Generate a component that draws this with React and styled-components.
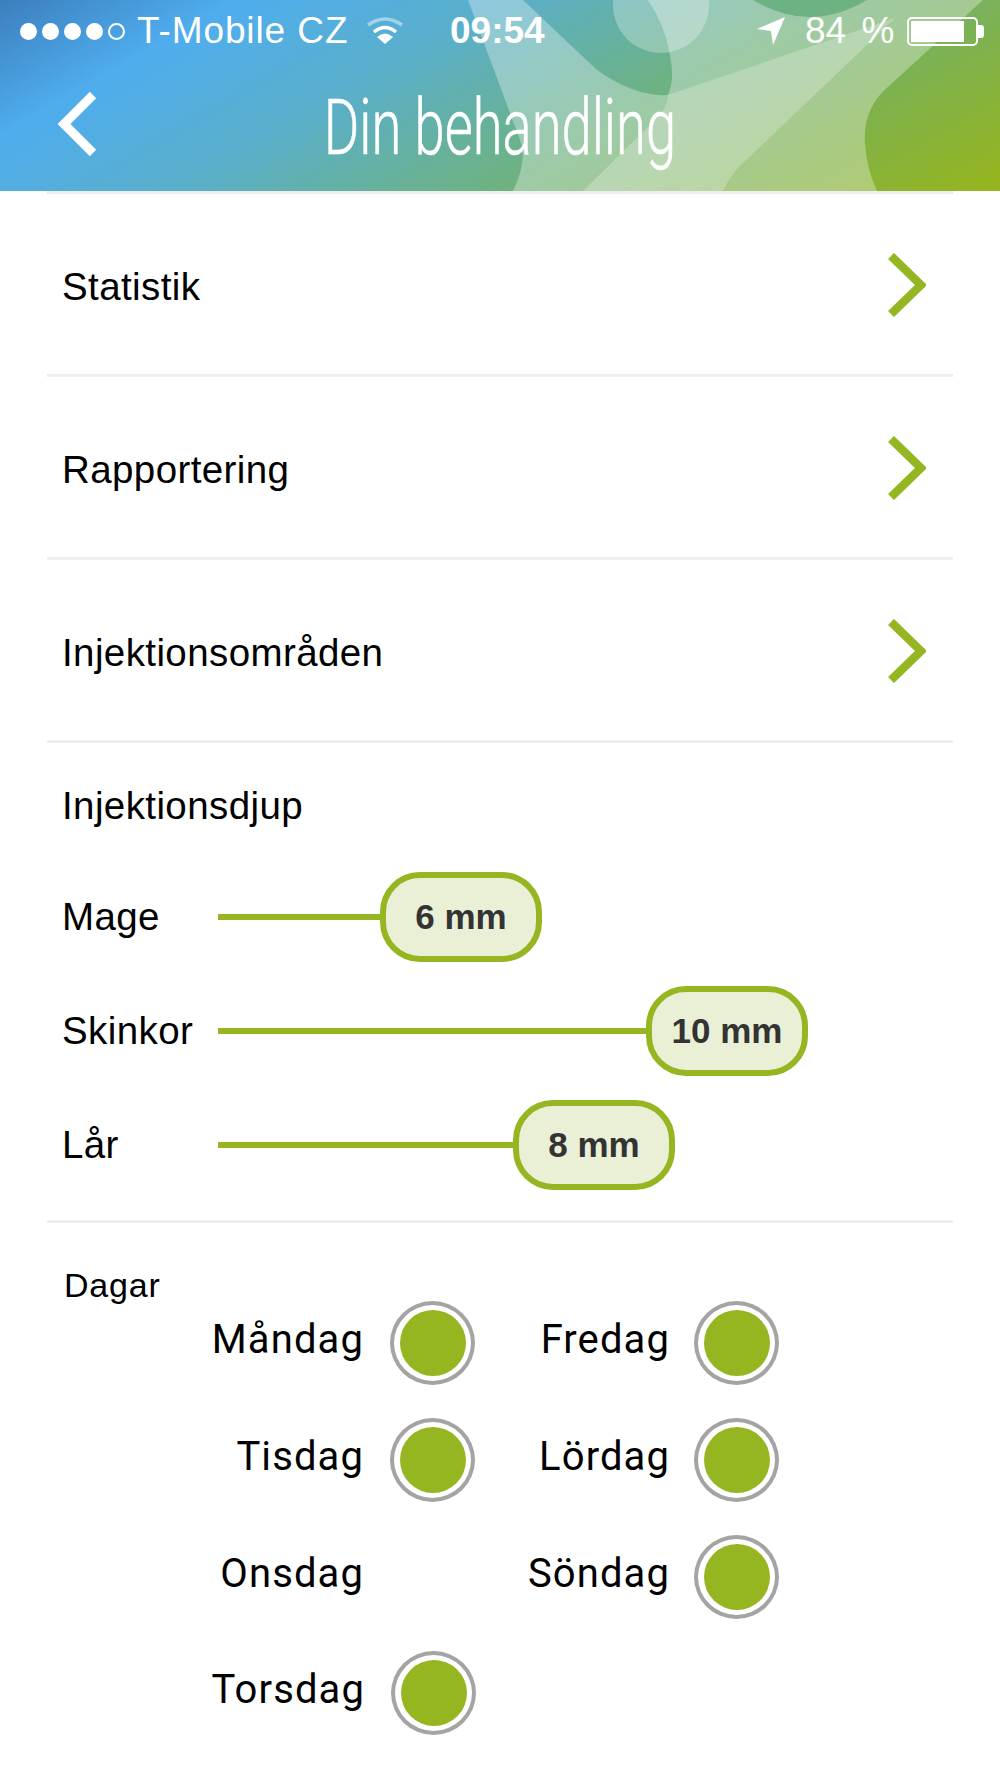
import React from "react";
import styled, { createGlobalStyle } from "styled-components";

const GlobalStyle = createGlobalStyle`
  html, body {
    margin: 0;
    padding: 0;
    background: #fff;
  }
  body {
    font-family: "Liberation Sans", Arial, sans-serif;
  }
`;

const GREEN = "#95b521";

const Page = styled.div`
  width: 1000px;
  height: 1778px;
  overflow: hidden;
  background: #fff;
  color: #000;
`;

const Header = styled.header`
  position: relative;
  height: 191px;
  overflow: hidden;
  color: #fff;
  background: linear-gradient(
    150deg,
    #3c7fbe 0%,
    #4fadee 18%,
    #5aafca 38%,
    #6bb28c 58%,
    #7fb24c 80%,
    #97b51c 100%
  );
`;

const Blobs = styled.svg`
  position: absolute;
  inset: 0;
  width: 1000px;
  height: 191px;
`;

const StatusBar = styled.div`
  position: relative;
  display: grid;
  grid-template-columns: 450px 96px 1fr;
  align-items: center;
  height: 60px;
  padding-top: 2px;
  box-sizing: border-box;
  font-size: 37px;
`;

const StatusLeft = styled.div`
  display: flex;
  align-items: center;
  padding-left: 20px;
`;

const Signal = styled.div`
  display: flex;
  gap: 5px;
  margin-right: 12px;
`;

const Dot = styled.span`
  width: 17px;
  height: 17px;
  box-sizing: border-box;
  border-radius: 50%;
  border: 2px solid #fff;
  background: ${(p) => (p.$empty ? "transparent" : "#fff")};
`;

const Carrier = styled.span`
  margin-right: 18px;
  white-space: nowrap;
  letter-spacing: 0.9px;
`;

const Time = styled.span`
  font-weight: 700;
  white-space: nowrap;
`;

const StatusRight = styled.div`
  display: flex;
  align-items: center;
  padding-left: 211px;
`;

const Percent = styled.span`
  margin-left: 20px;
  margin-right: 13px;
  white-space: nowrap;
  word-spacing: 5px;
`;

const Battery = styled.div`
  position: relative;
  box-sizing: border-box;
  width: 71px;
  height: 29px;
  padding: 2px;
  border: 2px solid #fff;
  border-radius: 5px;

  &::after {
    content: "";
    position: absolute;
    left: 69px;
    top: 6px;
    width: 6px;
    height: 13px;
    border-radius: 0 3px 3px 0;
    background: #fff;
  }
`;

const BatteryFill = styled.div`
  height: 100%;
  background: #fff;
`;

const NavBar = styled.div`
  position: relative;
  display: flex;
  align-items: center;
  justify-content: center;
  height: 131px;
`;

const BackIcon = styled.svg`
  position: absolute;
  left: 54px;
  top: 30px;
`;

const Title = styled.h1`
  margin: 5px 0 0;
  font-family: Roboto, "Liberation Sans", sans-serif;
  font-weight: 300;
  font-size: 77px;
  line-height: 126px;
  white-space: nowrap;
  -webkit-text-stroke: 0.6px #fff;
  transform: scaleX(0.705);
`;

const Content = styled.main`
  margin: 0 47px;
`;

const Divider = styled.hr`
  height: 3px;
  margin: 0;
  border: 0;
  background: #eeeeee;
`;

const MenuRow = styled.div`
  display: flex;
  align-items: center;
  justify-content: space-between;
  box-sizing: border-box;
  height: 180px;
  padding: 0 27px 0 15px;
`;

const RowLabel = styled.span`
  margin-top: 6px;
  font-size: 38.5px;
  letter-spacing: 0.4px;
`;

const RowChevron = styled.svg`
  margin-top: 2px;
`;

const DepthSection = styled.section`
  height: 477px;
  padding: 0 15px;
`;

const SectionTitle = styled.div`
  height: 117px;
  padding-top: 41px;
  box-sizing: border-box;
  font-size: 38.5px;
  line-height: 44px;
  letter-spacing: 0.4px;
`;

const SliderRow = styled.div`
  display: flex;
  align-items: center;
  height: 114px;
`;

const SliderLabel = styled.span`
  flex: none;
  width: 156px;
  font-size: 38.5px;
  letter-spacing: 0.4px;
`;

const Track = styled.div`
  flex: none;
  width: ${(p) => p.$length}px;
  height: 6px;
  background: ${GREEN};
`;

const Pill = styled.div`
  flex: none;
  display: flex;
  align-items: center;
  justify-content: center;
  box-sizing: border-box;
  width: 162px;
  height: 90px;
  border: 6px solid ${GREEN};
  border-radius: 40px;
  background: #e9f0d6;
  color: #333;
  font-size: 35px;
  font-weight: 700;
`;

const DaysSection = styled.section`
  position: relative;
  padding-top: 62px;
`;

const DaysTitle = styled.div`
  position: absolute;
  left: 17px;
  top: 43px;
  font-size: 34px;
  letter-spacing: 0.8px;
`;

const DayGrid = styled.div`
  display: grid;
  grid-template-columns: 428px 304px;
  grid-template-rows: repeat(4, 116.7px);
  grid-auto-flow: column;
  align-items: center;
`;

const Day = styled.div`
  display: flex;
  align-items: center;
  justify-content: flex-end;
  gap: ${(p) => p.$gap}px;
  margin-left: ${(p) => p.$shift || 0}px;
  margin-right: ${(p) => -(p.$shift || 0)}px;
`;

const DayName = styled.span`
  margin-top: -7px;
  font-family: Roboto, "Liberation Sans", sans-serif;
  font-size: 40px;
  letter-spacing: 1.1px;
`;

const Radio = styled.div`
  display: flex;
  align-items: center;
  justify-content: center;
  box-sizing: border-box;
  width: 85px;
  height: 84px;
  border: 4px solid #a4a4a4;
  border-radius: 50%;
  visibility: ${(p) => (p.$hidden ? "hidden" : "visible")};

  &::after {
    content: "";
    width: 66px;
    height: 66px;
    border-radius: 50%;
    background: ${GREEN};
  }
`;

const Chevron = () => (
  <RowChevron width="40" height="64" viewBox="0 0 40 64">
    <path d="M5 3 L35 32 L5 61" fill="none" stroke={GREEN} strokeWidth="8.5" />
  </RowChevron>
);

const menu = ["Statistik", "Rapportering", "Injektionsområden"];

const sliders = [
  { label: "Mage", value: "6 mm", length: 162 },
  { label: "Skinkor", value: "10 mm", length: 428 },
  { label: "Lår", value: "8 mm", length: 295 },
];

const days = [
  { name: "Måndag", on: true, gap: 26 },
  { name: "Tisdag", on: true, gap: 26 },
  { name: "Onsdag", on: false, gap: 26 },
  { name: "Torsdag", on: true, gap: 26, shift: 1 },
  { name: "Fredag", on: true, gap: 24 },
  { name: "Lördag", on: true, gap: 24 },
  { name: "Söndag", on: true, gap: 24 },
];

export default function App() {
  return (
    <Page>
      <GlobalStyle />
      <Header>
        <Blobs viewBox="0 0 1000 191">
          <path
            d="M468 0 L523 0 L597 70 Q635 97 668 95 Q675 80 670 55 Q665 25 648 0 L983 0 L890 85 Q862 108 865 145 Q867 170 877 191 L513 191 Q528 160 520 140 Z"
            fill="#fff"
            fillOpacity="0.32"
          />
          <path
            d="M668 95 L895 18 L740 166 Q730 176 723 191 L583 191 L655 120 Q668 108 668 95 Z"
            fill="#fff"
            fillOpacity="0.24"
          />
          <path d="M753 0 Q810 34 867 0 Z" fill="#4da268" fillOpacity="0.6" />
          <circle cx="661" cy="5" r="48" fill="#fff" fillOpacity="0.28" />
        </Blobs>
        <StatusBar>
          <StatusLeft>
            <Signal>
              <Dot />
              <Dot />
              <Dot />
              <Dot />
              <Dot $empty />
            </Signal>
            <Carrier>T-Mobile CZ</Carrier>
            <svg width="38" height="28" viewBox="0 0 38 28">
              <path d="M2 8 Q19 -4 36 8" fill="none" stroke="#fff" strokeOpacity="0.45" strokeWidth="3.5" />
              <path d="M8 15 Q19 6 30 15" fill="none" stroke="#fff" strokeWidth="3.5" />
              <path d="M19 27 L11 20 Q19 13 27 20 Z" fill="#fff" />
            </svg>
          </StatusLeft>
          <Time>09:54</Time>
          <StatusRight>
            <svg width="28" height="28" viewBox="0 0 28 28">
              <path d="M0 12 L28 0 L16 28 L14 14 Z" fill="#fff" />
            </svg>
            <Percent>84 %</Percent>
            <Battery>
              <BatteryFill style={{ width: "84%" }} />
            </Battery>
          </StatusRight>
        </StatusBar>
        <NavBar>
          <BackIcon width="46" height="68" viewBox="0 0 46 68">
            <path d="M39 5 L10 34 L39 63" fill="none" stroke="#fff" strokeWidth="9" />
          </BackIcon>
          <Title>Din behandling</Title>
        </NavBar>
      </Header>
      <Content>
        <Divider />
        {menu.map((item) => (
          <React.Fragment key={item}>
            <MenuRow>
              <RowLabel>{item}</RowLabel>
              <Chevron />
            </MenuRow>
            <Divider />
          </React.Fragment>
        ))}
        <DepthSection>
          <SectionTitle>Injektionsdjup</SectionTitle>
          {sliders.map((s) => (
            <SliderRow key={s.label}>
              <SliderLabel>{s.label}</SliderLabel>
              <Track $length={s.length} />
              <Pill>{s.value}</Pill>
            </SliderRow>
          ))}
        </DepthSection>
        <Divider />
        <DaysSection>
          <DaysTitle>Dagar</DaysTitle>
          <DayGrid>
            {days.map((d) => (
              <Day key={d.name} $gap={d.gap} $shift={d.shift}>
                <DayName>{d.name}</DayName>
                <Radio $hidden={!d.on} />
              </Day>
            ))}
          </DayGrid>
        </DaysSection>
      </Content>
    </Page>
  );
}
